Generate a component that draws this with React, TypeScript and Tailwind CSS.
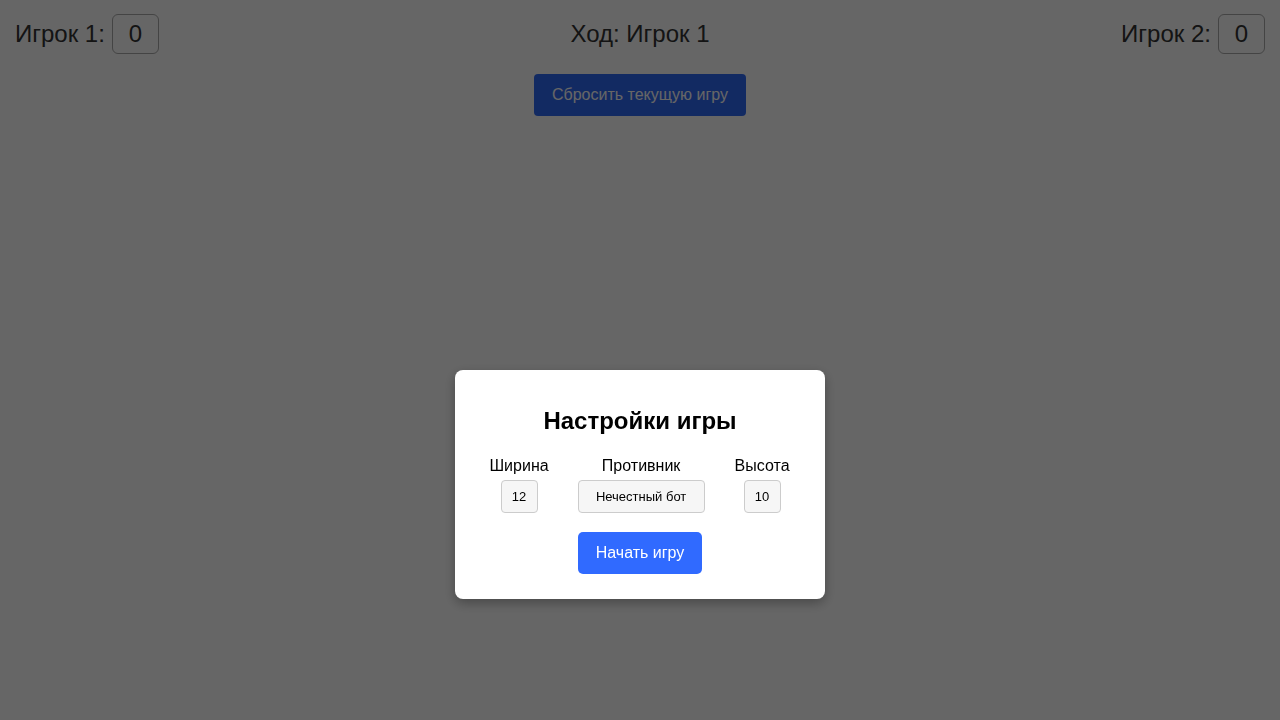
import React from 'react'

function ScoreBox({ value }: { value: number }) {
  return (
    <div className="h-[40px] min-w-[47px] px-[15px] flex items-center justify-center border border-[#aaaaaa] rounded-[6px] text-[24px] leading-none">
      {value}
    </div>
  )
}

function Field({ label, className = '', children }: { label: string; className?: string; children: React.ReactNode }) {
  return (
    <div className={`flex flex-col items-center ${className}`}>
      <span className="text-[16px] leading-[19px]">{label}</span>
      <div className="mt-[5px]">{children}</div>
    </div>
  )
}

export default function App() {
  return (
    <div
      className="relative min-h-[720px] bg-white text-[#333333]"
      style={{ fontFamily: '"Liberation Sans", Arial, sans-serif' }}
    >
      {/* Header: scores + turn */}
      <div className="flex items-center justify-between px-[15px] pt-[14px]">
        <div className="flex items-center gap-[7px]">
          <span className="text-[24px]">Игрок 1:</span>
          <ScoreBox value={0} />
        </div>
        <span className="text-[24px]">Ход: Игрок 1</span>
        <div className="flex items-center gap-[7px]">
          <span className="text-[24px]">Игрок 2:</span>
          <ScoreBox value={0} />
        </div>
      </div>

      <div className="flex justify-center mt-[20px]">
        <button className="h-[42px] w-[212px] rounded-[4px] bg-[#2f6af5] text-white text-[16px]">
          Сбросить текущую игру
        </button>
      </div>

      {/* Settings modal */}
      <div className="fixed inset-0 bg-[rgba(0,0,0,0.6)] flex justify-center items-start pt-[370px]">
        <div className="w-[370px] bg-white rounded-[8px] shadow-[0_4px_12px_rgba(0,0,0,0.3)] pt-[37px] pb-[25px] flex flex-col items-center text-black">
          <h2 className="text-[24px] leading-[28px] font-bold">Настройки игры</h2>
          <div className="flex items-start justify-center gap-[29px] mt-[21px] -ml-[1px]">
            <Field label="Ширина">
              <div className="w-[37px] h-[33px] flex items-center justify-center bg-[#f6f6f6] border border-[#cccccc] rounded-[4px] text-[13px]">
                12
              </div>
            </Field>
            <Field label="Противник">
              <div className="w-[127px] h-[33px] flex items-center justify-center bg-[#f6f6f6] border border-[#cccccc] rounded-[4px] text-[13px]">
                Нечестный бот
              </div>
            </Field>
            <Field label="Высота" className="ml-[1px]">
              <div className="w-[37px] h-[33px] flex items-center justify-center bg-[#f6f6f6] border border-[#cccccc] rounded-[4px] text-[13px]">
                10
              </div>
            </Field>
          </div>
          <button className="mt-[19px] w-[124px] h-[42px] rounded-[5px] bg-[#306aff] text-white text-[16px]">
            Начать игру
          </button>
        </div>
      </div>
    </div>
  )
}
